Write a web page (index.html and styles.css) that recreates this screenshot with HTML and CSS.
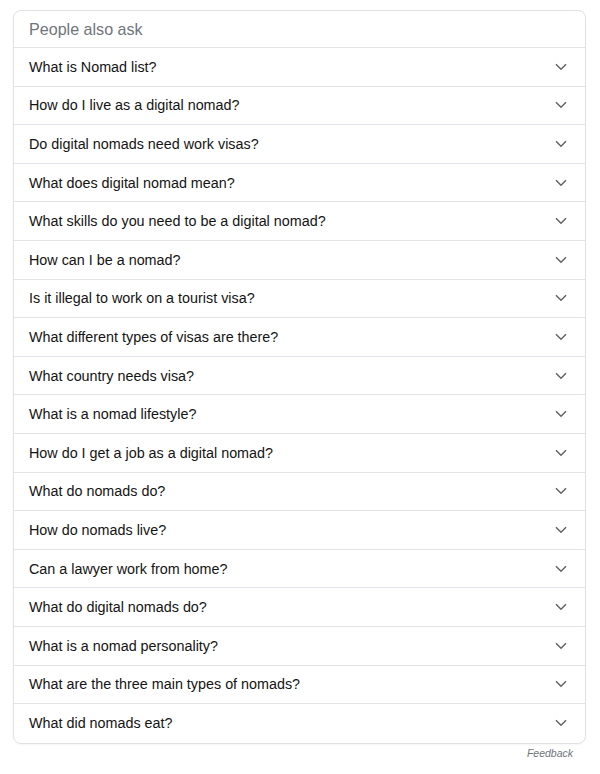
FILE: index.html
```html
<!DOCTYPE html>
<html>
<head>
<meta charset="utf-8">
<link rel="stylesheet" href="styles.css">
</head>
<body>
<div class="page">
  <div class="card">
    <div class="head">People also ask</div>
    <div class="row"><span class="q">What is Nomad list?</span><svg class="chev" viewBox="0 0 12 8"><path d="M1 1.2 L6 6.2 L11 1.2"/></svg></div>
    <div class="row"><span class="q">How do I live as a digital nomad?</span><svg class="chev" viewBox="0 0 12 8"><path d="M1 1.2 L6 6.2 L11 1.2"/></svg></div>
    <div class="row"><span class="q">Do digital nomads need work visas?</span><svg class="chev" viewBox="0 0 12 8"><path d="M1 1.2 L6 6.2 L11 1.2"/></svg></div>
    <div class="row"><span class="q">What does digital nomad mean?</span><svg class="chev" viewBox="0 0 12 8"><path d="M1 1.2 L6 6.2 L11 1.2"/></svg></div>
    <div class="row"><span class="q">What skills do you need to be a digital nomad?</span><svg class="chev" viewBox="0 0 12 8"><path d="M1 1.2 L6 6.2 L11 1.2"/></svg></div>
    <div class="row"><span class="q">How can I be a nomad?</span><svg class="chev" viewBox="0 0 12 8"><path d="M1 1.2 L6 6.2 L11 1.2"/></svg></div>
    <div class="row"><span class="q">Is it illegal to work on a tourist visa?</span><svg class="chev" viewBox="0 0 12 8"><path d="M1 1.2 L6 6.2 L11 1.2"/></svg></div>
    <div class="row"><span class="q">What different types of visas are there?</span><svg class="chev" viewBox="0 0 12 8"><path d="M1 1.2 L6 6.2 L11 1.2"/></svg></div>
    <div class="row"><span class="q">What country needs visa?</span><svg class="chev" viewBox="0 0 12 8"><path d="M1 1.2 L6 6.2 L11 1.2"/></svg></div>
    <div class="row"><span class="q">What is a nomad lifestyle?</span><svg class="chev" viewBox="0 0 12 8"><path d="M1 1.2 L6 6.2 L11 1.2"/></svg></div>
    <div class="row"><span class="q">How do I get a job as a digital nomad?</span><svg class="chev" viewBox="0 0 12 8"><path d="M1 1.2 L6 6.2 L11 1.2"/></svg></div>
    <div class="row"><span class="q">What do nomads do?</span><svg class="chev" viewBox="0 0 12 8"><path d="M1 1.2 L6 6.2 L11 1.2"/></svg></div>
    <div class="row"><span class="q">How do nomads live?</span><svg class="chev" viewBox="0 0 12 8"><path d="M1 1.2 L6 6.2 L11 1.2"/></svg></div>
    <div class="row"><span class="q">Can a lawyer work from home?</span><svg class="chev" viewBox="0 0 12 8"><path d="M1 1.2 L6 6.2 L11 1.2"/></svg></div>
    <div class="row"><span class="q">What do digital nomads do?</span><svg class="chev" viewBox="0 0 12 8"><path d="M1 1.2 L6 6.2 L11 1.2"/></svg></div>
    <div class="row"><span class="q">What is a nomad personality?</span><svg class="chev" viewBox="0 0 12 8"><path d="M1 1.2 L6 6.2 L11 1.2"/></svg></div>
    <div class="row"><span class="q">What are the three main types of nomads?</span><svg class="chev" viewBox="0 0 12 8"><path d="M1 1.2 L6 6.2 L11 1.2"/></svg></div>
    <div class="row"><span class="q">What did nomads eat?</span><svg class="chev" viewBox="0 0 12 8"><path d="M1 1.2 L6 6.2 L11 1.2"/></svg></div>
  </div>
  <div class="feedback">Feedback</div>
</div>
</body>
</html>
```
FILE: styles.css
```css
* { box-sizing: border-box; }
html, body { margin: 0; padding: 0; background: #fff; }
body { font-family: "Liberation Sans", Arial, sans-serif; }
.page { padding: 10px 14px 0 13px; width: 600px; }
.card {
  border: 1px solid #dfe1e5;
  border-radius: 8px;
  box-shadow: 0 1px 2px rgba(0,0,0,0.04);
  display: flex;
  flex-direction: column;
}
.head {
  height: 37px;
  display: flex;
  align-items: center;
  padding-left: 15px;
  font-size: 16.1px;
  color: #70757a;
  border-bottom: 1px solid #e3e4e7;
}
.row {
  height: 38.6px;
  display: flex;
  align-items: center;
  justify-content: space-between;
  padding: 0 18px 0 15px;
  border-bottom: 1px solid #e3e4e7;
}
.row:last-child { border-bottom: none; }
.q { font-size: 14.35px; color: #141414; }
.chev { width: 12px; height: 8px; flex: none; }
.chev path { fill: none; stroke: #5f6368; stroke-width: 1.5; }
.feedback {
  text-align: right;
  padding: 3px 13px 0 0;
  font-size: 10.5px;
  font-style: italic;
  color: #70757a;
}
```
